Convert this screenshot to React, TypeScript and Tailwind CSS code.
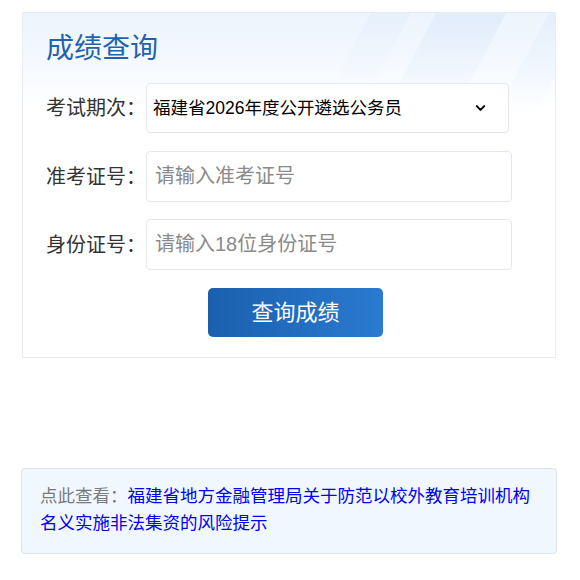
import { ChevronDown } from 'lucide-react';

const font = "font-['Liberation_Sans','Noto_Sans_CJK_SC',sans-serif]";

function Field({ label, placeholder }: { label: string; placeholder: string }) {
  return (
    <div className="flex items-center">
      <label className="w-[100px] shrink-0 text-[20px] text-[#333]">{label}</label>
      <input
        placeholder={placeholder}
        className="h-[51px] w-[366px] rounded-[4px] border border-[#e4e7ed] bg-white px-[8px] text-[20px] text-[#333] outline-none placeholder:text-[#8a8a8a]"
      />
    </div>
  );
}

export default function App() {
  return (
    <div className={`${font} w-[580px] h-[580px] bg-white pt-[12px]`}>
      <div className="relative ml-[22px] w-[534px] overflow-hidden border border-[#e8ecf2] bg-[linear-gradient(to_bottom,#ecf4fd_0px,#f5f9fe_50px,#ffffff_95px)] px-[23px] pt-[16px] pb-[20px]">
        {/* light streaks in the header */}
        <div className="pointer-events-none absolute -top-[20px] right-[70px] h-[120px] w-[70px] skew-x-[-28deg] bg-[linear-gradient(to_bottom,rgba(190,215,245,0.3),rgba(255,255,255,0))]" />
        <div className="pointer-events-none absolute -top-[20px] right-[160px] h-[100px] w-[40px] skew-x-[-28deg] bg-[linear-gradient(to_bottom,rgba(200,222,246,0.22),rgba(255,255,255,0))]" />
        <div className="pointer-events-none absolute -top-[20px] -right-[10px] h-[130px] w-[40px] skew-x-[-28deg] bg-[linear-gradient(to_bottom,rgba(205,225,248,0.3),rgba(255,255,255,0))]" />

        <div className="relative">
          <h1 className="text-[28px] leading-[40px] text-[#1f62b0]">成绩查询</h1>

          <div className="mt-[14px] flex flex-col">
            <div className="flex items-center">
              <label className="w-[100px] shrink-0 text-[20px] text-[#333]">考试期次：</label>
              <div className="relative h-[50px] w-[363px] rounded-[4px] border border-[#e4e7ed] bg-white">
                <select className="h-full w-full appearance-none bg-transparent pl-[6px] text-[17.5px] text-black outline-none">
                  <option>福建省2026年度公开遴选公务员</option>
                </select>
                <ChevronDown
                  className="pointer-events-none absolute right-[20px] top-1/2 -translate-y-1/2 text-black"
                  size={15}
                  strokeWidth={3.2}
                />
              </div>
            </div>
            <div className="mt-[18px]">
              <Field label="准考证号：" placeholder="请输入准考证号" />
            </div>
            <div className="mt-[17px]">
              <Field label="身份证号：" placeholder="请输入18位身份证号" />
            </div>
          </div>

          <div className="mt-[18px] pl-[162px]">
            <button className="h-[49px] w-[175px] rounded-[5px] bg-[linear-gradient(to_right,#1b60ae,#2a7ad0)] text-[22px] text-white">
              查询成绩
            </button>
          </div>
        </div>
      </div>

      <div className="ml-[21px] mt-[110px] w-[536px] rounded-[4px] border border-[#dde3ea] bg-[#f0f7ff] px-[18px] pt-[14px] pb-[16px] text-[17.5px] leading-[27px]">
        <span className="text-[#7a7a7a]">点此查看：</span>
        <a className="text-[#0000ee]">福建省地方金融管理局关于防范以校外教育培训机构名义实施非法集资的风险提示</a>
      </div>
    </div>
  );
}
